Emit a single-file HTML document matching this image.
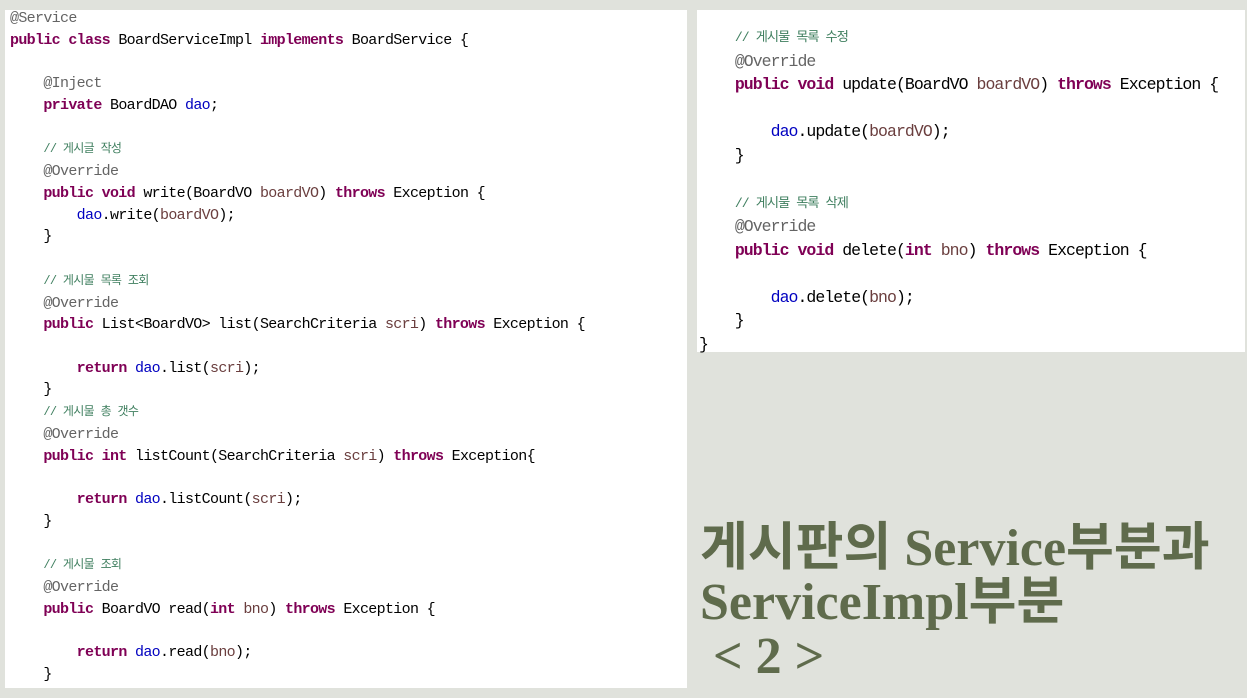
<!DOCTYPE html>
<html><head><meta charset="utf-8"><style>
body{margin:0;width:1247px;height:698px;background:#e0e2dc;position:relative;overflow:hidden}
.p{position:absolute;background:#fff}
pre{margin:0;font-family:"Liberation Mono","Noto Sans CJK KR",monospace;color:#000;white-space:pre}
#l{left:5px;top:10px;width:682px;height:678px}
#l pre{position:absolute;left:5px;top:-2px;font-size:15px;letter-spacing:-0.67px;line-height:21.73px}
#r{left:697px;top:10px;width:548px;height:342px}
#r pre{position:absolute;left:2px;top:15px;font-size:16.5px;letter-spacing:-0.95px;line-height:23.5px}
.k{color:#7f0055;font-weight:bold}.a{color:#646464}.c{color:#3f7f5f;font-size:0.8em}.f{color:#0000c0}.v{color:#6a3e3e}
#t{position:absolute;left:700px;top:522px;font-family:"Liberation Serif","Noto Sans CJK KR",serif;font-weight:bold;font-size:52px;line-height:54px;color:#5f6b4c;letter-spacing:0px}
</style></head><body>
<div class="p" id="l"><pre><span class="a">@Service</span>
<span class="k">public class</span> BoardServiceImpl <span class="k">implements</span> BoardService {

    <span class="a">@Inject</span>
    <span class="k">private</span> BoardDAO <span class="f">dao</span>;

    <span class="c">// 게시글 작성</span>
    <span class="a">@Override</span>
    <span class="k">public void</span> write(BoardVO <span class="v">boardVO</span>) <span class="k">throws</span> Exception {
        <span class="f">dao</span>.write(<span class="v">boardVO</span>);
    }

    <span class="c">// 게시물 목록 조회</span>
    <span class="a">@Override</span>
    <span class="k">public</span> List&lt;BoardVO&gt; list(SearchCriteria <span class="v">scri</span>) <span class="k">throws</span> Exception {

        <span class="k">return</span> <span class="f">dao</span>.list(<span class="v">scri</span>);
    }
    <span class="c">// 게시물 총 갯수</span>
    <span class="a">@Override</span>
    <span class="k">public int</span> listCount(SearchCriteria <span class="v">scri</span>) <span class="k">throws</span> Exception{

        <span class="k">return</span> <span class="f">dao</span>.listCount(<span class="v">scri</span>);
    }

    <span class="c">// 게시물 조회</span>
    <span class="a">@Override</span>
    <span class="k">public</span> BoardVO read(<span class="k">int</span> <span class="v">bno</span>) <span class="k">throws</span> Exception {

        <span class="k">return</span> <span class="f">dao</span>.read(<span class="v">bno</span>);
    }</pre></div>
<div class="p" id="r"><pre>    <span class="c">// 게시물 목록 수정</span>
    <span class="a">@Override</span>
    <span class="k">public void</span> update(BoardVO <span class="v">boardVO</span>) <span class="k">throws</span> Exception {

        <span class="f">dao</span>.update(<span class="v">boardVO</span>);
    }

    <span class="c">// 게시물 목록 삭제</span>
    <span class="a">@Override</span>
    <span class="k">public void</span> delete(<span class="k">int</span> <span class="v">bno</span>) <span class="k">throws</span> Exception {

        <span class="f">dao</span>.delete(<span class="v">bno</span>);
    }
}</pre></div>
<div id="t">게시판의 Service부분과<br>ServiceImpl부분<br>&nbsp;&lt; 2 &gt;</div>
</body></html>
